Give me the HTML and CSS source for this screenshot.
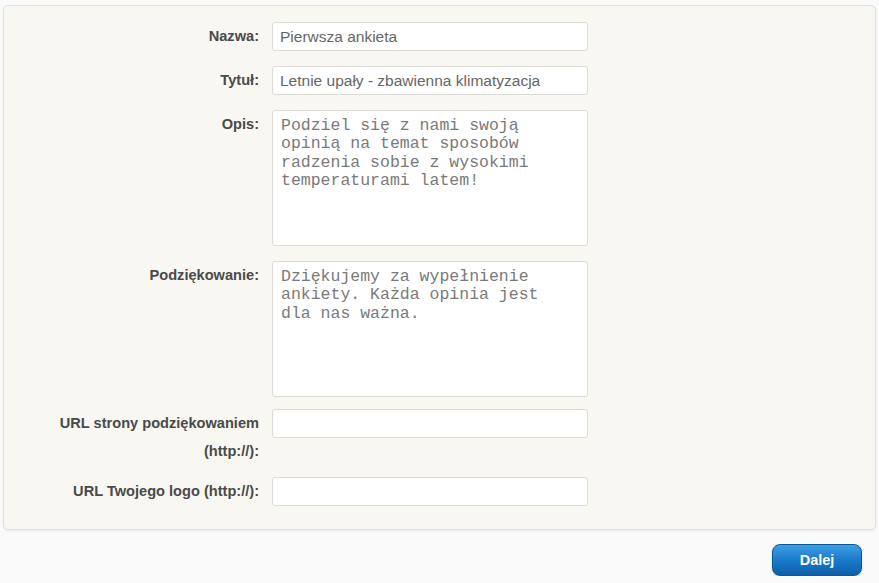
FILE: index.html
```html
<!DOCTYPE html>
<html lang="pl">
<head>
    <meta charset="UTF-8">
    <meta name="viewport" content="width=device-width, initial-scale=1.0">
    <title>Nowa ankieta</title>
    <link rel="stylesheet" href="styles.css">
</head>
<body>

<form class="survey-form">
    <div class="panel">
        <div class="row">
            <label class="label" for="name">Nazwa:</label>
            <input class="field" id="name" type="text" value="Pierwsza ankieta">
        </div>
        <div class="row">
            <label class="label" for="title">Tytuł:</label>
            <input class="field" id="title" type="text" value="Letnie upały - zbawienna klimatyzacja">
        </div>
        <div class="row">
            <label class="label" for="desc">Opis:</label>
            <textarea class="field area" id="desc">Podziel się z nami swoją opinią na temat sposobów radzenia sobie z wysokimi temperaturami latem!</textarea>
        </div>
        <div class="row row-tight">
            <label class="label" for="thanks">Podziękowanie:</label>
            <textarea class="field area" id="thanks">Dziękujemy za wypełnienie ankiety. Każda opinia jest dla nas ważna.</textarea>
        </div>
        <div class="row row-tight">
            <label class="label" for="thanks-url">URL strony podziękowaniem (http://):</label>
            <input class="field" id="thanks-url" type="text" value="">
        </div>
        <div class="row">
            <label class="label" for="logo-url">URL Twojego logo (http://):</label>
            <input class="field" id="logo-url" type="text" value="">
        </div>
    </div>

    <div class="actions">
        <button type="button" class="btn-next">Dalej</button>
    </div>
</form>

</body>
</html>
```

FILE: styles.css
```css
body {
    font-family: "Liberation Sans", Arial, sans-serif;
    background-color: #fafafa;
    color: #444;
    margin: 0;
    padding: 0;
}

.survey-form {
    padding: 5px 3px 0 3px;
}

.panel {
    background-color: #f8f7f1;
    border: 1px solid #e2e0d8;
    border-radius: 5px;
    box-shadow: 0 1px 2px rgba(0, 0, 0, 0.08);
    padding: 16px 0 23px 0;
}

.row {
    display: grid;
    grid-template-columns: 255px 316px;
    column-gap: 13px;
    align-items: start;
    margin-bottom: 15px;
}

.row-tight {
    margin-bottom: 12px;
}

.row:last-child {
    margin-bottom: 0;
}

.label {
    padding-left: 30px;
    text-align: right;
    font-weight: bold;
    font-size: 14.6px;
    line-height: 28px;
    color: #4a4a4a;
}

.field {
    box-sizing: border-box;
    width: 316px;
    height: 29px;
    margin: 0;
    padding: 0 7px;
    border: 1px solid #dcdbd6;
    border-radius: 3px;
    background-color: #ffffff;
    font-family: "Liberation Sans", Arial, sans-serif;
    font-size: 15.5px;
    color: #666;
    outline: none;
}

.area {
    height: 136px;
    padding: 6px 20px 6px 8px;
    resize: none;
    font-family: "Liberation Mono", "Courier New", monospace;
    font-size: 16.5px;
    line-height: 18.3px;
    color: #7a7a7a;
    overflow: hidden;
}

.actions {
    text-align: right;
    padding: 14px 14px 0 0;
}

.btn-next {
    width: 90px;
    height: 32px;
    border: 1px solid #0b5699;
    border-radius: 8px;
    background: linear-gradient(to bottom, #3f9fe3 0%, #1a7acb 50%, #0d5fa9 100%);
    color: #ffffff;
    font-family: "Liberation Sans", Arial, sans-serif;
    font-size: 14.5px;
    font-weight: bold;
    cursor: pointer;
    box-shadow: 0 1px 2px rgba(0, 0, 0, 0.2);
}

.btn-next:hover {
    background: #0d5fa9;
}
```
